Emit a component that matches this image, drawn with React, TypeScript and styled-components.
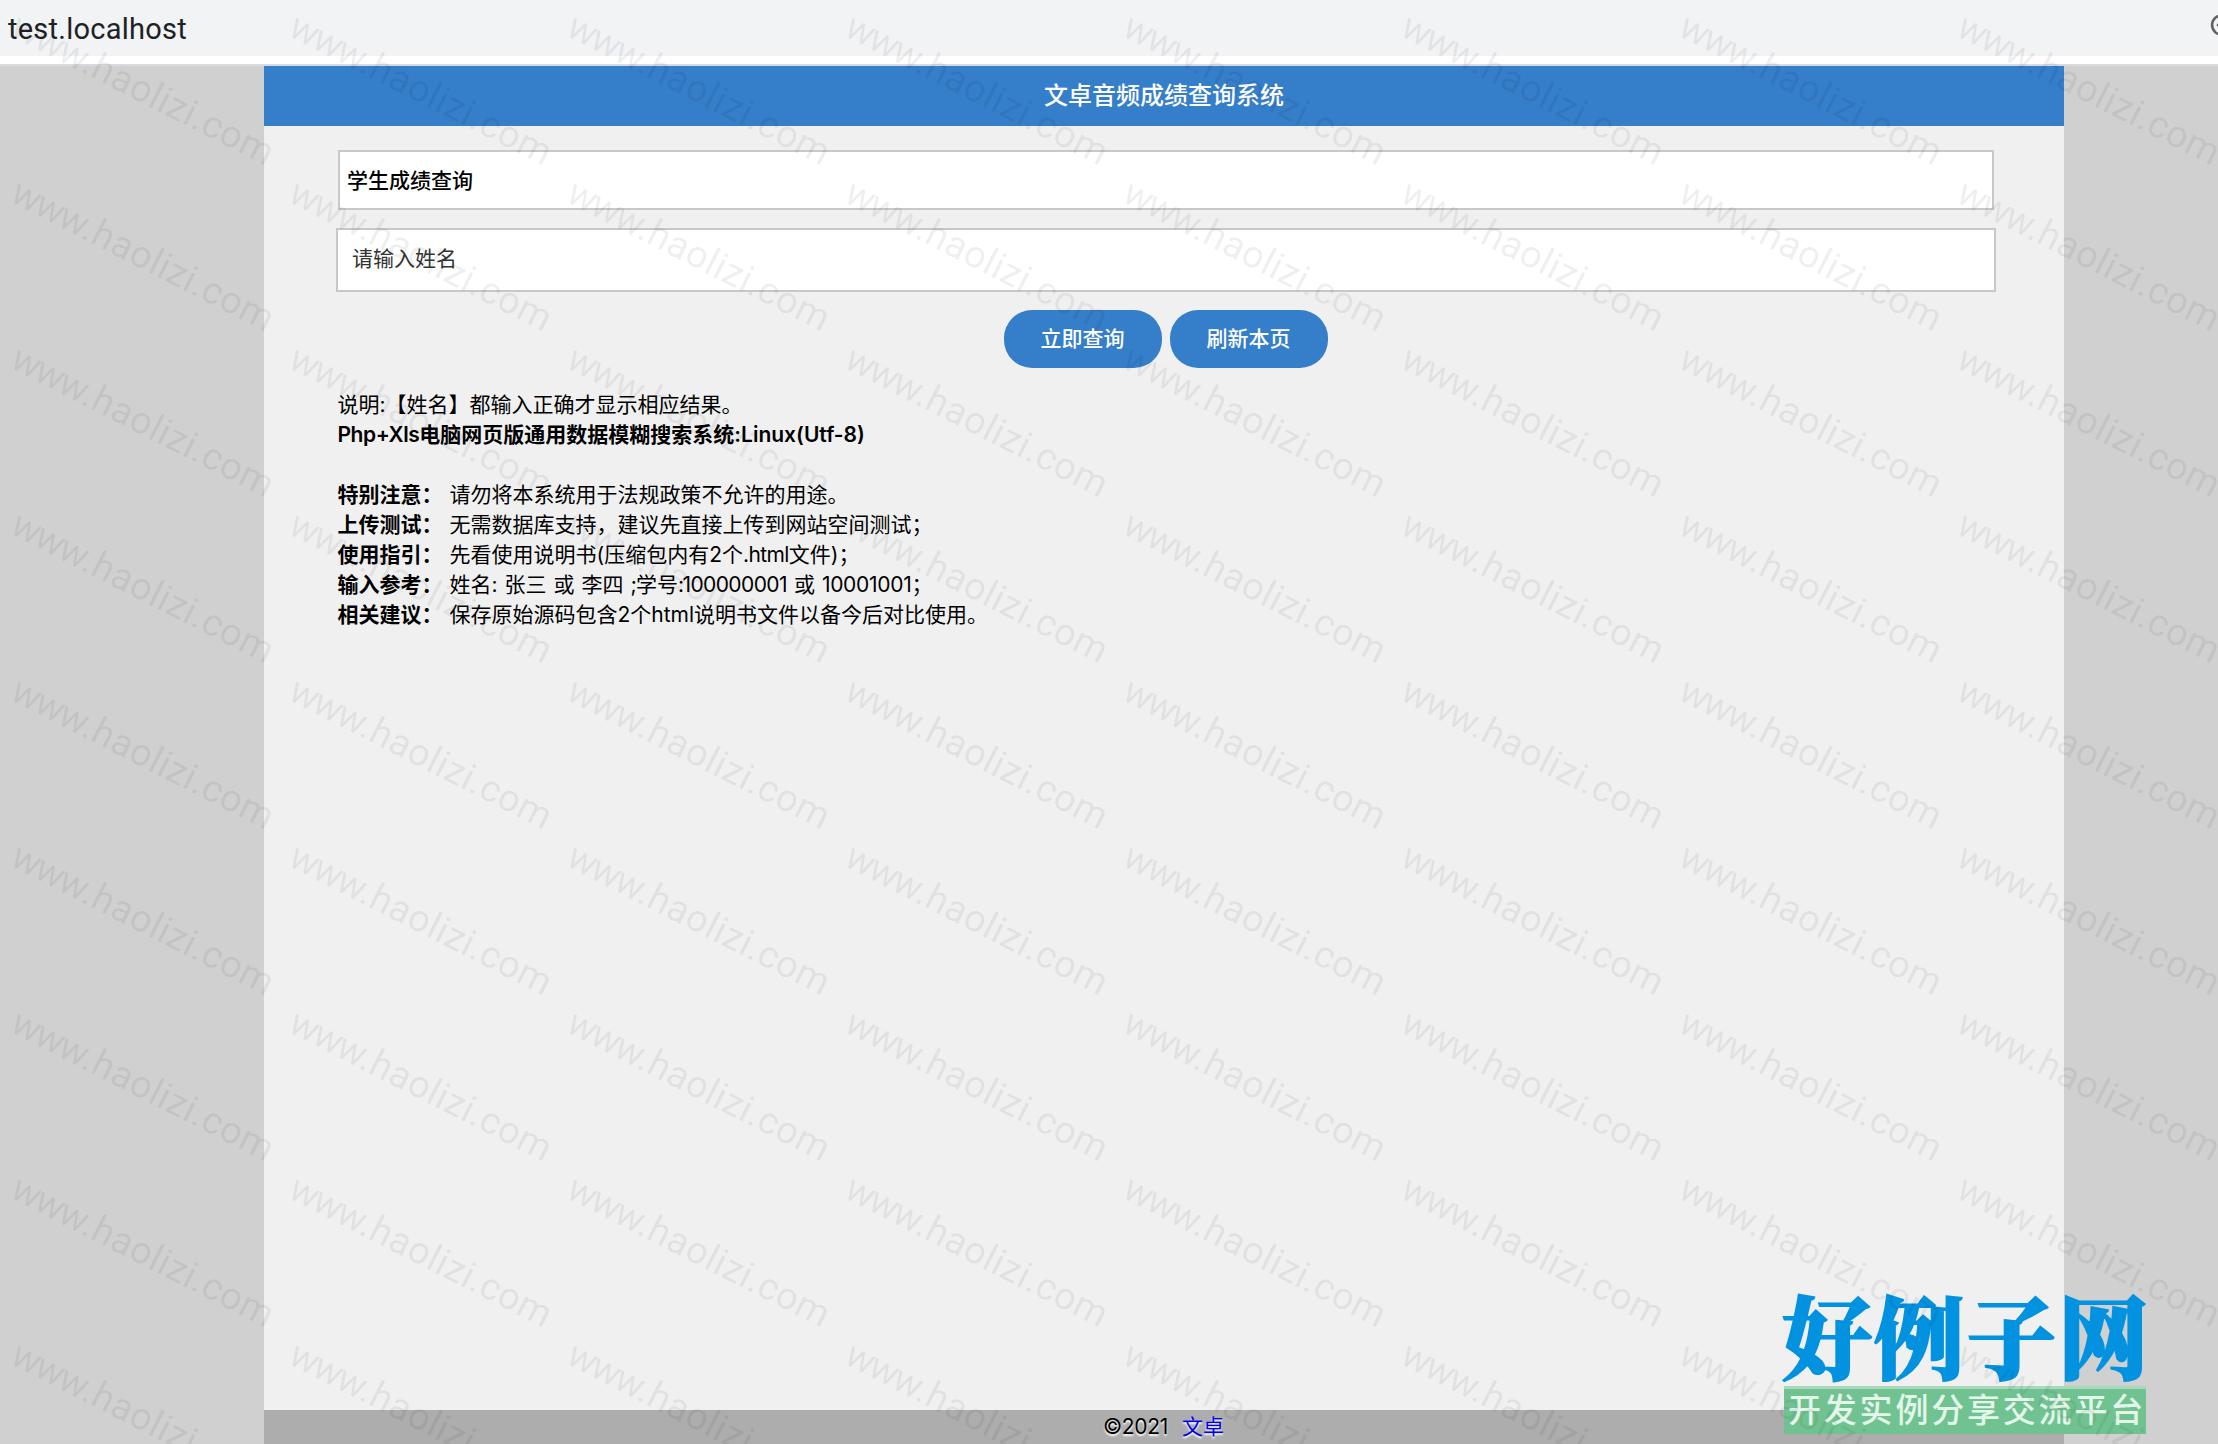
import React from "react";
import styled, { createGlobalStyle } from "styled-components";

const GlobalStyle = createGlobalStyle`
  * { box-sizing: border-box; }
  html, body { margin: 0; padding: 0; overflow: hidden; }
  body { font-family: Inter, "Noto Sans CJK SC", sans-serif; color: #000; }
`;

const Screen = styled.div`
  position: relative;
  display: flex;
  flex-direction: column;
  width: 2218px;
  height: 1444px;
  overflow: hidden;
  background: #d0d0d0;
`;

const AddressBar = styled.header`
  display: flex;
  align-items: center;
  justify-content: space-between;
  height: 66px;
  flex: none;
  padding: 0 0 10px 8px;
  background: linear-gradient(#f1f3f5 0 56px, #fff 56px 64px, #dadbe0 64px 66px);
`;

const Address = styled.span`
  padding-top: 2px;
  font: 400 29px/56px Roboto, sans-serif;
  letter-spacing: 0.25px;
  color: #202124;
`;

const ZoomIcon = styled.svg`
  flex: none;
  width: 30px;
  height: 30px;
  margin: 0 -22px 6px 0;
`;

const Page = styled.main`
  display: flex;
  flex-direction: column;
  flex: 1;
  width: 1800px;
  margin-left: 264px;
  background: #f0f0f0;
`;

const Title = styled.h1`
  margin: 0;
  height: 60px;
  background: #357ec9;
  color: #fff;
  font-size: 24px;
  font-weight: 500;
  line-height: 60px;
  text-align: center;
`;

const Form = styled.form`
  display: flex;
  flex-direction: column;
  align-items: center;
  gap: 18px;
  padding: 24px 68px 0 72px;
`;

const Field = styled.div<{ $inset?: boolean }>`
  display: flex;
  align-items: center;
  width: ${(p) => (p.$inset ? 1656 : 1660)}px;
  height: ${(p) => (p.$inset ? 60 : 64)}px;
  padding: 0 ${(p) => (p.$inset ? 7 : 14)}px ${(p) => (p.$inset ? 2 : 6)}px;
  border: 2px solid #c8c8c8;
  background: #fff;
  color: ${(p) => (p.$inset ? "#000" : "#333")};
  font-size: 21px;
  font-weight: ${(p) => (p.$inset ? 500 : 400)};
`;

const Actions = styled.div`
  display: flex;
  gap: 8px;
`;

const Button = styled.button`
  width: 158px;
  height: 58px;
  padding: 0 1px 5px 0;
  border: 0;
  border-radius: 28px;
  background: #357ec9;
  color: #fff;
  font: 500 21px "Noto Sans CJK SC", sans-serif;
`;

const Notes = styled.section`
  flex: 1;
  padding: 22px 74px 0 73.5px;
  font-size: 21px;
  line-height: 30px;
`;

const Line = styled.div<{ $bold?: boolean }>`
  display: flex;
  height: 30px;
  white-space: pre;
  word-spacing: 1.1px;
  font-weight: ${(p) => (p.$bold ? 600 : 400)};
`;

const Latin = styled.span<{ $track: number }>`
  letter-spacing: ${(p) => p.$track}px;
`;

const Label = styled.strong`
  width: 112px;
  font-weight: 600;
`;

const Footer = styled.footer`
  display: flex;
  justify-content: center;
  gap: 14px;
  height: 34px;
  padding-right: 1px;
  background: #adadad;
  font-size: 21px;
  line-height: 34px;
  text-shadow: 0 2px 2px #fff;
`;

const Link = styled.a`
  color: #0000ee;
`;

const Brand = styled.div`
  position: absolute;
  left: 1784px;
  top: 1286px;
  display: flex;
  flex-direction: column;
  width: 362px;
`;

const BrandName = styled.div`
  height: 100px;
  margin-left: -2px;
  font: 900 90px/94px "Noto Serif CJK SC", "Noto Sans CJK SC", serif;
  letter-spacing: 2.2px;
  color: #0292df;
  -webkit-text-stroke: 2px #0292df;
  white-space: nowrap;
`;

const BrandTag = styled.div`
  height: 48px;
  border-top: 3px solid #a9d8bc;
  background: #70c391;
  color: #e4f5ea;
  font: 500 33px/39px "Noto Sans CJK SC", sans-serif;
  letter-spacing: 2.8px;
  padding-left: 4px;
  white-space: nowrap;
`;

const Watermarks = styled.div`
  position: absolute;
  left: 0;
  top: 0;
  display: grid;
  grid-template-columns: repeat(8, 278px);
  grid-auto-rows: 166px;
  pointer-events: none;
`;

const Mark = styled.span`
  padding: 2px 0 0 8.5px;
  font: 400 38px/40px Roboto, sans-serif;
  letter-spacing: 0.4px;
  color: rgba(0, 0, 0, 0.07);
  white-space: nowrap;
  transform: rotate(27deg);
  transform-origin: 8.5px 34.5px;
`;

const Tight = styled.span`
  letter-spacing: -1.9px;
`;

const notes: [string, React.ReactNode][] = [
  ["特别注意：", "请勿将本系统用于法规政策不允许的用途。"],
  ["上传测试：", "无需数据库支持，建议先直接上传到网站空间测试；"],
  ["使用指引：", <>先看使用说明书(压缩包内有2个<Latin $track={-0.6}>.html</Latin>文件)；</>],
  [
    "输入参考：",
    <>
      姓名: 张三 或 李四 <Latin $track={-1}>;</Latin>学号<Latin $track={-1.5}>:</Latin>
      <Latin $track={-0.6}>100000001</Latin> 或 <Latin $track={-0.3}>10001001</Latin>；
    </>,
  ],
  ["相关建议：", "保存原始源码包含2个html说明书文件以备今后对比使用。"],
];

export default function App() {
  return (
    <Screen>
      <GlobalStyle />
      <AddressBar>
        <Address>test.localhost</Address>
        <ZoomIcon viewBox="0 0 30 30" fill="none" stroke="#5f6368" strokeWidth="2.6">
          <circle cx="11.8" cy="15" r="9.7" />
          <path d="M6.8 15h10M11.8 10v10M19 22l7 7" />
        </ZoomIcon>
      </AddressBar>
      <Page>
        <Title>文卓音频成绩查询系统</Title>
        <Form onSubmit={(e) => e.preventDefault()}>
          <Field $inset>学生成绩查询</Field>
          <Field>请输入姓名</Field>
          <Actions>
            <Button type="submit">立即查询</Button>
            <Button type="button">刷新本页</Button>
          </Actions>
        </Form>
        <Notes>
          <Line>说明:【姓名】都输入正确才显示相应结果。</Line>
          <Line $bold>
            <Latin $track={-0.45}>Php+Xls</Latin>
            电脑网页版通用数据模糊搜索系统:Linux(Utf-8)
          </Line>
          <Line />
          {notes.map(([label, text]) => (
            <Line key={label}>
              <Label>{label}</Label>
              <span>{text}</span>
            </Line>
          ))}
        </Notes>
        <Footer>
          <Latin $track={-0.3}>©2021</Latin>
          <Link>文卓</Link>
        </Footer>
      </Page>
      <Brand>
        <BrandName>好例子网</BrandName>
        <BrandTag>开发实例分享交流平台</BrandTag>
      </Brand>
      <Watermarks>
        {Array.from({ length: 72 }, (_, i) => (
          <Mark key={i}>
            <Tight>www</Tight>.haolizi.com
          </Mark>
        ))}
      </Watermarks>
    </Screen>
  );
}
